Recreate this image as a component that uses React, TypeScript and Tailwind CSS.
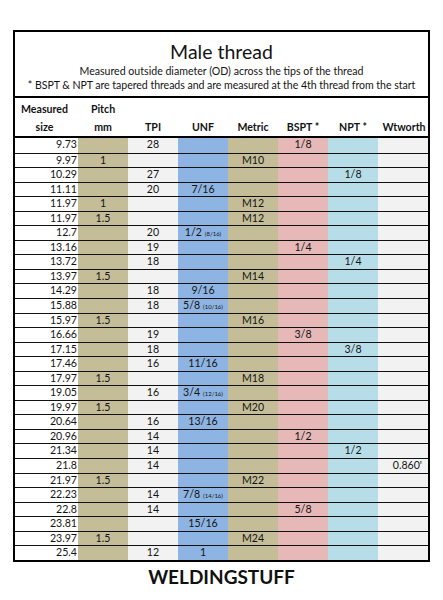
import React from "react";

type Row = {
  m: string;
  p?: string;
  tpi?: string;
  unf?: string;
  unfSub?: string;
  metric?: string;
  bspt?: string;
  npt?: string;
  w?: string;
};

const rows: Row[] = [
  { m: "9.73", tpi: "28", bspt: "1/8" },
  { m: "9.97", p: "1", metric: "M10" },
  { m: "10.29", tpi: "27", npt: "1/8" },
  { m: "11.11", tpi: "20", unf: "7/16" },
  { m: "11.97", p: "1", metric: "M12" },
  { m: "11.97", p: "1.5", metric: "M12" },
  { m: "12.7", tpi: "20", unf: "1/2", unfSub: "(8/16)" },
  { m: "13.16", tpi: "19", bspt: "1/4" },
  { m: "13.72", tpi: "18", npt: "1/4" },
  { m: "13.97", p: "1.5", metric: "M14" },
  { m: "14.29", tpi: "18", unf: "9/16" },
  { m: "15.88", tpi: "18", unf: "5/8", unfSub: "(10/16)" },
  { m: "15.97", p: "1.5", metric: "M16" },
  { m: "16.66", tpi: "19", bspt: "3/8" },
  { m: "17.15", tpi: "18", npt: "3/8" },
  { m: "17.46", tpi: "16", unf: "11/16" },
  { m: "17.97", p: "1.5", metric: "M18" },
  { m: "19.05", tpi: "16", unf: "3/4", unfSub: "(12/16)" },
  { m: "19.97", p: "1.5", metric: "M20" },
  { m: "20.64", tpi: "16", unf: "13/16" },
  { m: "20.96", tpi: "14", bspt: "1/2" },
  { m: "21.34", tpi: "14", npt: "1/2" },
  { m: "21.8", tpi: "14", w: "0.860'" },
  { m: "21.97", p: "1.5", metric: "M22" },
  { m: "22.23", tpi: "14", unf: "7/8", unfSub: "(14/16)" },
  { m: "22.8", tpi: "14", bspt: "5/8" },
  { m: "23.81", unf: "15/16" },
  { m: "23.97", p: "1.5", metric: "M24" },
  { m: "25.4", tpi: "12", unf: "1" },
];

const font = { fontFamily: "Lato, 'Open Sans', sans-serif" };

export default function App() {
  return (
    <div className="w-[443px] h-[600px] bg-white text-[#141414]" style={font}>
      <div className="pt-[30px] px-[13px]">
        <div className="border-2 border-black">
          {/* Title block */}
          <div className="h-[66px] flex flex-col items-center border-b-2 border-black">
            <div className="text-[19.5px] leading-[24px] mt-[8px]">Male thread</div>
            <div className="text-[10.6px] leading-[14px]">
              Measured outside diameter (OD) across the tips of the thread
            </div>
            <div className="text-[10.6px] leading-[14px] tracking-[-0.05px]">
              * BSPT &amp; NPT are tapered threads and are measured at the 4th thread from the start
            </div>
          </div>
          {/* Header row */}
          <div className="grid grid-cols-[63px_repeat(7,1fr)] h-[40px] border-b-2 border-black text-[10.6px] font-bold leading-[18px]">
            <div className="flex flex-col items-center justify-end pr-[4px]">
              <div>Measured</div>
              <div>size</div>
            </div>
            <div className="flex flex-col items-center justify-end">
              <div>Pitch</div>
              <div>mm</div>
            </div>
            <div className="flex items-end justify-center">TPI</div>
            <div className="flex items-end justify-center">UNF</div>
            <div className="flex items-end justify-center">Metric</div>
            <div className="flex items-end justify-center">BSPT *</div>
            <div className="flex items-end justify-center">NPT *</div>
            <div className="flex items-end justify-center whitespace-nowrap pl-[2px]">Wtworth</div>
          </div>
          {/* Data rows */}
          <div className="flex flex-col">
            {rows.map((r, i) => (
              <div
                key={i}
                className={
                  "grid grid-cols-[63px_repeat(7,1fr)] h-[14.55px] text-[10.6px] leading-[13.55px] " +
                  (i > 0 ? "border-t border-[#111]" : "")
                }
              >
                <div className="bg-white text-right pr-[1px]">{r.m}</div>
                <div className="bg-[#c4bd97] text-center">{r.p}</div>
                <div className="bg-[#f2f2f2] text-center">{r.tpi}</div>
                <div className="bg-[#8db4e2] text-center whitespace-nowrap">
                  {r.unf}
                  {r.unfSub && <span className="text-[6px] ml-[3px]">{r.unfSub}</span>}
                </div>
                <div className="bg-[#c4bd97] text-center">{r.metric}</div>
                <div className="bg-[#e6b8b7] text-center">{r.bspt}</div>
                <div className="bg-[#b7dee8] text-center">{r.npt}</div>
                <div className="bg-[#f2f2f2] text-right pr-[6px]">{r.w}</div>
              </div>
            ))}
          </div>
        </div>
      </div>
      <div className="text-center font-bold text-[19px] leading-[22px] mt-[4px] text-[#111]">WELDINGSTUFF</div>
    </div>
  );
}
